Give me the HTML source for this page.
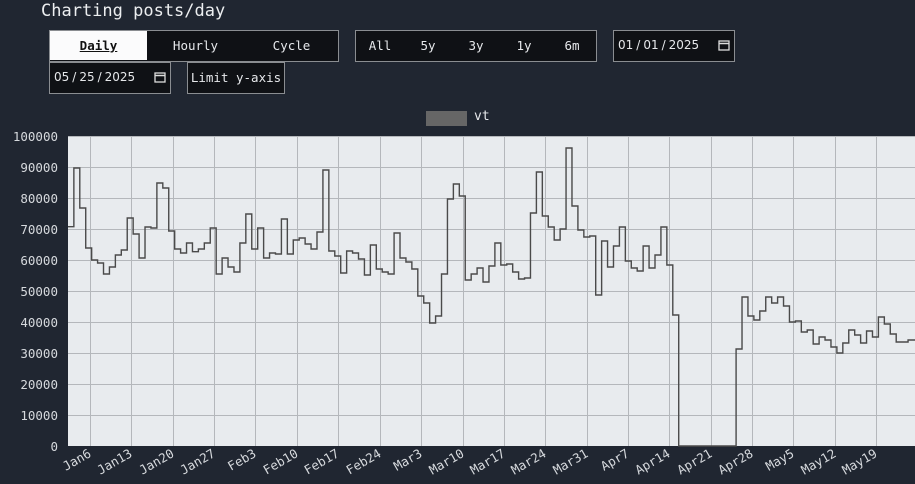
<!DOCTYPE html>
<html><head><meta charset="utf-8"><style>
html,body{margin:0;padding:0;width:915px;height:484px;overflow:hidden;background:#202631;font-family:"DejaVu Sans Mono","Liberation Mono",monospace;color:#e6e8eb}
.t{position:absolute;left:41px;top:1px;font-size:17px;color:#eceef0}
.g{position:absolute;box-sizing:border-box;border:1px solid #8a8d91;background:#0f1115;font-size:12.5px;color:#e6e8eb;white-space:nowrap}
.b{position:absolute;top:0;height:29px;line-height:29px;text-align:center;white-space:nowrap}
.d{font-size:12px;font-family:"DejaVu Sans","Liberation Sans",sans-serif}
.d span{display:inline-block;padding:0 3px}
</style></head><body>
<div class="t">Charting posts/day</div>
<div class="g" style="left:49px;top:30px;width:290px;height:32px">
 <div class="b" style="left:0;width:97px;background:#fbfbfc;color:#111;font-weight:bold;text-decoration:underline">Daily</div>
 <div class="b" style="left:97px;width:97px">Hourly</div>
 <div class="b" style="left:194px;width:95px">Cycle</div>
</div>
<div class="g" style="left:355px;top:30px;width:242px;height:32px">
 <div class="b" style="left:8px;width:32px">All</div>
 <div class="b" style="left:56px;width:32px">5y</div>
 <div class="b" style="left:104px;width:32px">3y</div>
 <div class="b" style="left:152px;width:32px">1y</div>
 <div class="b" style="left:200px;width:32px">6m</div>
</div>
<div class="g" style="left:613px;top:30px;width:122px;height:32px"><div class="b d" style="left:4px;width:96px;text-align:left">01<span>/</span>01<span>/</span>2025</div>
<svg style="position:absolute;left:104px;top:8px" width="12" height="12"><rect x="1" y="2" width="10" height="9" fill="none" stroke="#ddd" stroke-width="1.3"/><line x1="1" y1="4.5" x2="11" y2="4.5" stroke="#ddd" stroke-width="1.5"/></svg></div>
<div class="g" style="left:49px;top:62px;width:122px;height:32px"><div class="b d" style="left:4px;width:96px;text-align:left">05<span>/</span>25<span>/</span>2025</div>
<svg style="position:absolute;left:104px;top:8px" width="12" height="12"><rect x="1" y="2" width="10" height="9" fill="none" stroke="#ddd" stroke-width="1.3"/><line x1="1" y1="4.5" x2="11" y2="4.5" stroke="#ddd" stroke-width="1.5"/></svg></div>
<div class="g" style="left:187px;top:62px;width:98px;height:32px"><div class="b" style="left:0;width:96px">Limit y-axis</div></div>
<div style="position:absolute;left:426px;top:111px;width:41px;height:15px;background:#666"></div>
<div style="position:absolute;left:474px;top:109px;font-size:13px">vt</div>
<svg style="position:absolute;left:0;top:0" width="915" height="484" font-family="DejaVu Sans Mono, Liberation Mono, monospace" font-size="12.5" fill="#d6d9dd">
<defs><clipPath id="c"><rect x="68" y="130" width="847" height="317"/></clipPath></defs>
<rect x="68" y="136" width="847" height="310" fill="#e8ebee"/>
<g stroke="#b4b7bb" stroke-width="1">
<line x1="68" x2="915" y1="136.5" y2="136.5"/><line x1="68" x2="915" y1="167.5" y2="167.5"/><line x1="68" x2="915" y1="198.5" y2="198.5"/><line x1="68" x2="915" y1="229.5" y2="229.5"/><line x1="68" x2="915" y1="260.5" y2="260.5"/><line x1="68" x2="915" y1="291.5" y2="291.5"/><line x1="68" x2="915" y1="322.5" y2="322.5"/><line x1="68" x2="915" y1="353.5" y2="353.5"/><line x1="68" x2="915" y1="384.5" y2="384.5"/><line x1="68" x2="915" y1="415.5" y2="415.5"/>
<line y1="136" y2="446" x1="90.5" x2="90.5"/><line y1="136" y2="446" x1="131.5" x2="131.5"/><line y1="136" y2="446" x1="173.5" x2="173.5"/><line y1="136" y2="446" x1="214.5" x2="214.5"/><line y1="136" y2="446" x1="255.5" x2="255.5"/><line y1="136" y2="446" x1="297.5" x2="297.5"/><line y1="136" y2="446" x1="338.5" x2="338.5"/><line y1="136" y2="446" x1="380.5" x2="380.5"/><line y1="136" y2="446" x1="421.5" x2="421.5"/><line y1="136" y2="446" x1="463.5" x2="463.5"/><line y1="136" y2="446" x1="504.5" x2="504.5"/><line y1="136" y2="446" x1="545.5" x2="545.5"/><line y1="136" y2="446" x1="587.5" x2="587.5"/><line y1="136" y2="446" x1="628.5" x2="628.5"/><line y1="136" y2="446" x1="669.5" x2="669.5"/><line y1="136" y2="446" x1="711.5" x2="711.5"/><line y1="136" y2="446" x1="752.5" x2="752.5"/><line y1="136" y2="446" x1="793.5" x2="793.5"/><line y1="136" y2="446" x1="835.5" x2="835.5"/><line y1="136" y2="446" x1="876.5" x2="876.5"/>
</g>
<path clip-path="url(#c)" fill="none" stroke="#4a4a4a" stroke-width="1.4" d="M68 226.7H73.86V168h5.93V208h5.93V248h5.93V260h5.93V263h5.93V274h5.93V267h5.93V255h5.93V250h5.93V218h5.93V234h5.93V258h5.93V227h5.93V228h5.93V183h5.93V188h5.93V231h5.93V249h5.93V253h5.93V243h5.93V251.7h5.93V249h5.93V243h5.93V228h5.93V274h5.93V258h5.93V267h5.93V272h5.93V243h5.93V214h5.93V249h5.93V228h5.93V258h5.93V253h5.93V254h5.93V219h5.93V254h5.93V240h5.93V238h5.93V244h5.93V249h5.93V232h5.93V170h5.93V251h5.93V256h5.93V273h5.93V251h5.93V253h5.93V259h5.93V275h5.93V245h5.93V269h5.93V272h5.93V274h5.93V233h5.93V258h5.93V262h5.93V269h5.93V296h5.93V303h5.93V323h5.93V316h5.93V274h5.93V199h5.93V184h5.93V196h5.93V280h5.93V274h5.93V268h5.93V282h5.93V266h5.93V243h5.93V265h5.93V264h5.93V272h5.93V279h5.93V278h5.93V213h5.93V172h5.93V216h5.93V227h5.93V240h5.93V229h5.93V148h5.93V206h5.93V230h5.93V237h5.93V236h5.93V295h5.93V241h5.93V267h5.93V246h5.93V227h5.93V261h5.93V268h5.93V271h5.93V246h5.93V268h5.93V255h5.93V227h5.93V265h5.93V315h5.93V446h5.93V446h5.93V446h5.93V446h5.93V446h5.93V446h5.93V446h5.93V446h5.93V446h5.93V446h4V349h5.93V297h5.93V316h5.93V320h5.93V311h5.93V297h5.93V303h5.93V297h5.93V306h5.93V322h5.93V321h5.93V332h5.93V330h5.93V344h5.93V337h5.93V340h5.93V347h5.93V353h5.93V343h5.93V330h5.93V335h5.93V343h5.93V331h5.93V337h5.93V317h5.93V324h5.93V334h5.93V342h5.93V342h5.93V340h5.93V340h5.93"/>
<g text-anchor="end">
<text x="58" y="141">100000</text><text x="58" y="172">90000</text><text x="58" y="203">80000</text><text x="58" y="234">70000</text><text x="58" y="265">60000</text><text x="58" y="296">50000</text><text x="58" y="327">40000</text><text x="58" y="358">30000</text><text x="58" y="389">20000</text><text x="58" y="420">10000</text><text x="58" y="451">0</text>
<text transform="translate(92,456) rotate(-30)">Jan6</text><text transform="translate(133,456) rotate(-30)">Jan13</text><text transform="translate(175,456) rotate(-30)">Jan20</text><text transform="translate(216,456) rotate(-30)">Jan27</text><text transform="translate(257,456) rotate(-30)">Feb3</text><text transform="translate(299,456) rotate(-30)">Feb10</text><text transform="translate(340,456) rotate(-30)">Feb17</text><text transform="translate(382,456) rotate(-30)">Feb24</text><text transform="translate(423,456) rotate(-30)">Mar3</text><text transform="translate(465,456) rotate(-30)">Mar10</text><text transform="translate(506,456) rotate(-30)">Mar17</text><text transform="translate(547,456) rotate(-30)">Mar24</text><text transform="translate(589,456) rotate(-30)">Mar31</text><text transform="translate(630,456) rotate(-30)">Apr7</text><text transform="translate(671,456) rotate(-30)">Apr14</text><text transform="translate(713,456) rotate(-30)">Apr21</text><text transform="translate(754,456) rotate(-30)">Apr28</text><text transform="translate(795,456) rotate(-30)">May5</text><text transform="translate(837,456) rotate(-30)">May12</text><text transform="translate(878,456) rotate(-30)">May19</text>
</g>
</svg>
</body></html>
